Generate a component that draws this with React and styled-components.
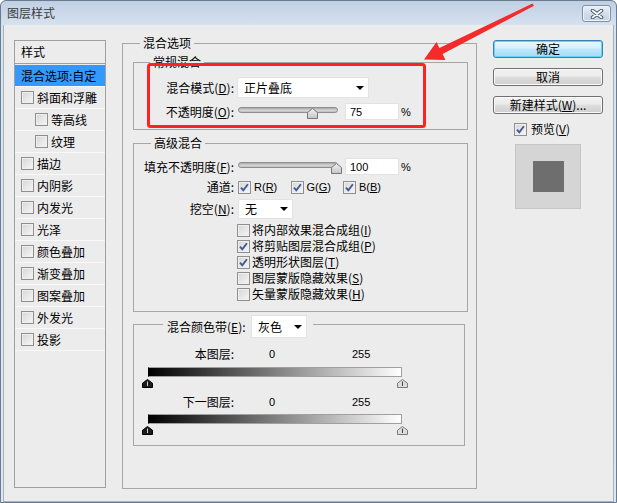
import React from "react"
import styled, { createGlobalStyle } from "styled-components"

const GlobalStyle = createGlobalStyle`
  html, body {
    margin: 0;
    padding: 0;
  }
  body {
    font-family: "Liberation Sans", "Noto Sans CJK SC", sans-serif;
    font-size: 12px;
    line-height: 16px;
    color: #000;
    background: #fff;
  }
  * {
    box-sizing: border-box;
  }
`

const Window = styled.div`
  position: relative;
  width: 617px;
  height: 503px;
  display: flex;
  flex-direction: column;
  border: 1px solid #6b7b90;
  border-radius: 6px 6px 0 0;
  background: linear-gradient(#bfcfe3, #d8e3f0 26px, #dce6f2);
  overflow: hidden;
`

const TitleBar = styled.div`
  height: 24px;
  flex: none;
  display: flex;
  align-items: center;
  padding: 0 5px 0 6px;
`

const Title = styled.div`
  font-family: "Noto Sans CJK SC", sans-serif;
  color: #3c3c3c;
`

const CloseButton = styled.div`
  margin-left: auto;
  align-self: flex-start;
  margin-top: 4px;
  width: 29px;
  height: 17px;
  display: flex;
  align-items: center;
  justify-content: center;
  border: 1px solid #7f90a6;
  border-radius: 3px;
  background: linear-gradient(#e9eff7, #d3deeb 50%, #c6d3e4);
  box-shadow: inset 0 0 0 1px #eef3f9;
`

const Body = styled.div`
  flex: 1;
  display: flex;
  align-items: flex-start;
  margin: 0 2px;
  padding: 10px 0 0 10px;
  background: #ececec;
  border: 1px solid #a3b2c5;
  border-top: none;
`

const StyleList = styled.div`
  flex: none;
  width: 92px;
  height: 448px;
  margin-top: 5px;
  border: 1px solid #a0a0a0;
  font-family: "Noto Sans CJK SC", sans-serif;
`

const ListHeader = styled.div`
  height: 23px;
  display: flex;
  align-items: center;
  padding-left: 6px;
  border-bottom: 1px solid #a0a0a0;
  margin-bottom: 1px;
`

const ListItem = styled.div`
  height: 22px;
  display: flex;
  align-items: center;
  padding-left: ${(p) => p.$indent}px;
  border-bottom: 1px solid #f9f9f9;
  background: ${(p) => (p.$selected ? "#3399ff" : "transparent")};
`

const ItemText = styled.span`
  margin-left: 3px;
  white-space: nowrap;
`

const Group = styled.fieldset`
  margin: ${(p) => p.$mt || 0}px ${(p) => p.$mr || 0}px 0 0;
  padding: 0;
  min-width: 0;
  border: 1px solid #a6a6a6;
`

const MainGroup = styled(Group)`
  flex: none;
  width: 355px;
  height: 454px;
  margin-left: 16px;
`

const Legend = styled.legend`
  margin-left: ${(p) => p.$offset}px;
  padding: 0 3px;
  height: 16px;
  line-height: 16px;
  font-family: "Noto Sans CJK SC", sans-serif;
`

const BandLegend = styled.legend`
  margin-left: 29px;
  padding: 0 6px 0 4px;
  height: 18px;
  display: flex;
  align-items: flex-start;
  font-family: "Noto Sans CJK SC", sans-serif;
`

const MainInner = styled.div`
  padding: 3px 8px 0 10px;
`

const GroupInner = styled.div`
  padding: ${(p) => p.$pt}px 0 ${(p) => p.$pb}px 0;
`

const Row = styled.div`
  display: flex;
  align-items: center;
  height: ${(p) => p.$h}px;
  margin-top: ${(p) => p.$mt || 0}px;
`

const Label = styled.div`
  flex: none;
  width: ${(p) => p.$w || 100}px;
  text-align: ${(p) => p.$align || "right"};
  white-space: nowrap;
  line-height: ${(p) => p.$lh || 16}px;
  font-family: "Noto Sans CJK SC", sans-serif;
`

const U = styled.span`
  text-decoration: underline;
  text-underline-offset: 1px;
`

const Select = styled.div`
  flex: none;
  width: ${(p) => p.$w}px;
  height: ${(p) => p.$h}px;
  margin-left: ${(p) => p.$ml || 0}px;
  margin-bottom: ${(p) => p.$mb || 0}px;
  display: flex;
  align-items: center;
  padding: 0 4px 0 6px;
  background: #fff;
  border: 1px solid #e3e3e3;
  font-family: "Noto Sans CJK SC", sans-serif;
`

const Caret = styled.span`
  margin-left: auto;
  width: 0;
  height: 0;
  border-left: 4px solid transparent;
  border-right: 4px solid transparent;
  border-top: 4px solid #000;
`

const Slider = styled.div`
  position: relative;
  flex: none;
  width: 100px;
  height: 11px;
  margin-left: 4px;
  align-self: flex-start;
  margin-top: 4px;
`

const Track = styled.div`
  height: 6px;
  border: 1px solid #8e8e8e;
  border-radius: 3px;
  background: linear-gradient(#a9a9a9, #d6d6d6 60%, #bdbdbd);
`

const ThumbWrap = styled.div`
  position: absolute;
  top: 0;
  width: 11px;
  height: 11px;
`

const NumInput = styled.div`
  flex: none;
  width: 54px;
  height: 17px;
  margin-left: 7px;
  display: flex;
  align-items: center;
  padding-left: 4px;
  background: #fff;
  border: 1px solid #e3e3e3;
  font-size: 11px;
`

const Percent = styled.span`
  margin-left: 2px;
  font-size: 11px;
`

const Channels = styled.div`
  display: flex;
  margin-left: 4px;
`

const Channel = styled.div`
  display: flex;
  align-items: center;
  width: 52.5px;
  font-size: 11px;
`

const ChannelText = styled.span`
  margin-left: 3px;
`

const CheckList = styled.div`
  margin-top: 3px;
  padding-left: 103px;
  font-family: "Noto Sans CJK SC", sans-serif;
`

const CheckRow = styled.div`
  height: 16px;
  display: flex;
  align-items: center;
`

const CheckText = styled.span`
  margin-left: 2px;
  white-space: nowrap;
`

const Box = styled.span`
  flex: none;
  width: 13px;
  height: 13px;
  display: inline-flex;
  align-items: center;
  justify-content: center;
  border: 1px solid #8f8f8f;
  background: linear-gradient(135deg, #d6d6d6, #f6f6f6);
  box-shadow: inset 0 0 0 1px #efefef;
`

const Num = styled.div`
  flex: none;
  width: ${(p) => p.$w || 20}px;
  margin-left: ${(p) => p.$ml || 0}px;
  font-size: 11px;
`

const GradientBar = styled.div`
  width: 254px;
  height: 10px;
  margin: ${(p) => p.$mt}px 0 0 14px;
  border: 1px solid #a0a0a0;
  border-left-color: #000;
  background: linear-gradient(to right, #000, #fff);
`

const BandThumbs = styled.div`
  width: 266px;
  height: 9px;
  margin: 2px 0 0 8px;
  display: flex;
  justify-content: space-between;
`

const Side = styled.div`
  flex: none;
  width: 110px;
  margin: 5px 0 0 16px;
  font-family: "Noto Sans CJK SC", sans-serif;
`

const Button = styled.div`
  height: 18px;
  display: flex;
  align-items: center;
  justify-content: center;
  border: 1px solid ${(p) => (p.$primary ? "#3c7fb1" : "#707070")};
  border-radius: 3px;
  background: ${(p) =>
    p.$primary
      ? "linear-gradient(#eaf7fe, #d6f0fd 45%, #bee7fd 50%, #a7daf6)"
      : "linear-gradient(#f2f2f2, #ebebeb 45%, #dddddd 50%, #cfcfcf)"};
  box-shadow: inset 0 0 0 1px ${(p) => (p.$primary ? "#63d3fb" : "#fbfbfb")};
  & + & {
    margin-top: 10px;
  }
`

const PreviewRow = styled.div`
  height: 14px;
  margin-top: 8px;
  padding-left: 21px;
  display: flex;
  align-items: center;
`

const PreviewText = styled.span`
  margin-left: 4px;
`

const PreviewBox = styled.div`
  width: 66px;
  height: 65px;
  margin: 8px 0 0 22px;
  display: flex;
  align-items: center;
  justify-content: center;
  background: #d5d5d5;
  border: 1px solid #c6c6c6;
`

const PreviewSwatch = styled.div`
  width: 31px;
  height: 31px;
  background: #6e6e6e;
`

const Annotation = styled.svg`
  position: absolute;
  top: -1px;
  left: -1px;
  pointer-events: none;
`

const Check = ({ checked }) => (
  <Box>
    {checked && (
      <svg width="11" height="11" viewBox="0 0 11 11">
        <path d="M2 5.6 L4.3 8.3 L8.9 2.2" fill="none" stroke="#3e5a96" strokeWidth="1.9" />
      </svg>
    )}
  </Box>
)

const SliderThumb = ({ value }) => (
  <ThumbWrap style={{ left: `${value * 0.98 - 5}px` }}>
    <svg width="11" height="11" viewBox="0 0 11 11">
      <defs>
        <linearGradient id={`st${value}`} x1="0" y1="0" x2="0" y2="1">
          <stop offset="0" stopColor="#f4f4f4" />
          <stop offset="1" stopColor="#c4c4c4" />
        </linearGradient>
      </defs>
      <path d="M5.5 0.5 L10.5 4.5 V10.5 H0.5 V4.5 Z" fill={`url(#st${value})`} stroke="#777" />
    </svg>
  </ThumbWrap>
)

const BandThumb = ({ dark }) => (
  <svg width="11" height="9" viewBox="0 0 11 9">
    <path
      d="M5.5 0.5 L10.5 4.2 V8.5 H0.5 V4.2 Z"
      fill={dark ? "#1c1c1c" : "#dcdcdc"}
      stroke={dark ? "#000" : "#7a7a7a"}
    />
    <path d="M5.5 2.5 V7" stroke={dark ? "#d0d0d0" : "#444"} strokeWidth="1" />
  </svg>
)

const styleItems = [
  { label: "斜面和浮雕", indent: 6 },
  { label: "等高线", indent: 20 },
  { label: "纹理", indent: 20 },
  { label: "描边", indent: 6 },
  { label: "内阴影", indent: 6 },
  { label: "内发光", indent: 6 },
  { label: "光泽", indent: 6 },
  { label: "颜色叠加", indent: 6 },
  { label: "渐变叠加", indent: 6 },
  { label: "图案叠加", indent: 6 },
  { label: "外发光", indent: 6 },
  { label: "投影", indent: 6 },
]

const advancedChecks = [
  { text: "将内部效果混合成组", key: "I", checked: false },
  { text: "将剪贴图层混合成组", key: "P", checked: true },
  { text: "透明形状图层", key: "T", checked: true },
  { text: "图层蒙版隐藏效果", key: "S", checked: false },
  { text: "矢量蒙版隐藏效果", key: "H", checked: false },
]

const App = () => {
  return (
    <>
      <GlobalStyle />
      <Window>
        <TitleBar>
          <Title>图层样式</Title>
          <CloseButton>
            <svg width="14" height="10" viewBox="0 0 14 10">
              <path d="M2.5 1.5 L11.5 8.5 M11.5 1.5 L2.5 8.5" stroke="#4d5c70" strokeWidth="3.6" strokeLinecap="round" />
              <path d="M2.5 1.5 L11.5 8.5 M11.5 1.5 L2.5 8.5" stroke="#fff" strokeWidth="1.6" strokeLinecap="round" />
            </svg>
          </CloseButton>
        </TitleBar>

        <Body>
          <StyleList>
            <ListHeader>样式</ListHeader>
            <ListItem $indent={6} $selected>
              混合选项:自定
            </ListItem>
            {styleItems.map((item) => (
              <ListItem key={item.label} $indent={item.indent}>
                <Check />
                <ItemText>{item.label}</ItemText>
              </ListItem>
            ))}
          </StyleList>

          <MainGroup>
            <Legend $offset={17}>混合选项</Legend>
            <MainInner>
              <Group>
                <Legend $offset={16}>常规混合</Legend>
                <GroupInner $pt={7} $pb={9}>
                  <Row $h={21}>
                    <Label>
                      混合模式(<U>D</U>):
                    </Label>
                    <Select $w={132} $h={21} $ml={3}>
                      正片叠底
                      <Caret />
                    </Select>
                  </Row>
                  <Row $h={17} $mt={5}>
                    <Label>
                      不透明度(<U>O</U>):
                    </Label>
                    <Slider>
                      <Track />
                      <SliderThumb value={75} />
                    </Slider>
                    <NumInput>75</NumInput>
                    <Percent>%</Percent>
                  </Row>
                </GroupInner>
              </Group>

              <Group $mt={5}>
                <Legend $offset={17}>高级混合</Legend>
                <GroupInner $pt={7} $pb={9}>
                  <Row $h={17}>
                    <Label>
                      填充不透明度(<U>F</U>):
                    </Label>
                    <Slider>
                      <Track />
                      <SliderThumb value={100} />
                    </Slider>
                    <NumInput>100</NumInput>
                    <Percent>%</Percent>
                  </Row>
                  <Row $h={14} $mt={5}>
                    <Label>通道:</Label>
                    <Channels>
                      {["R", "G", "B"].map((c) => (
                        <Channel key={c}>
                          <Check checked />
                          <ChannelText>
                            {c}(<U>{c}</U>)
                          </ChannelText>
                        </Channel>
                      ))}
                    </Channels>
                  </Row>
                  <Row $h={20} $mt={5}>
                    <Label>
                      挖空(<U>N</U>):
                    </Label>
                    <Select $w={55} $h={20} $ml={4}>
                      无
                      <Caret />
                    </Select>
                  </Row>
                  <CheckList>
                    {advancedChecks.map((c) => (
                      <CheckRow key={c.key}>
                        <Check checked={c.checked} />
                        <CheckText>
                          {c.text}(<U>{c.key}</U>)
                        </CheckText>
                      </CheckRow>
                    ))}
                  </CheckList>
                </GroupInner>
              </Group>

              <Group $mt={3} $mr={3}>
                <BandLegend>
                  <Label $w={84} $align="left" $lh={23}>
                    混合颜色带(<U>E</U>):
                  </Label>
                  <Select $w={56} $h={23} $mb={-5}>
                    灰色
                    <Caret />
                  </Select>
                </BandLegend>
                <GroupInner $pt={14} $pb={10}>
                  <Row $h={14}>
                    <Label>本图层:</Label>
                    <Num $w={83} $ml={35}>0</Num>
                    <Num>255</Num>
                  </Row>
                  <GradientBar $mt={6} />
                  <BandThumbs>
                    <BandThumb dark />
                    <BandThumb />
                  </BandThumbs>
                  <Row $h={14} $mt={7}>
                    <Label>下一图层:</Label>
                    <Num $w={83} $ml={35}>0</Num>
                    <Num>255</Num>
                  </Row>
                  <GradientBar $mt={5} />
                  <BandThumbs>
                    <BandThumb dark />
                    <BandThumb />
                  </BandThumbs>
                </GroupInner>
              </Group>
            </MainInner>
          </MainGroup>

          <Side>
            <Button $primary>确定</Button>
            <Button>取消</Button>
            <Button>
              新建样式(<U>W</U>)...
            </Button>
            <PreviewRow>
              <Check checked />
              <PreviewText>
                预览(<U>V</U>)
              </PreviewText>
            </PreviewRow>
            <PreviewBox>
              <PreviewSwatch />
            </PreviewBox>
          </Side>
        </Body>

        <Annotation width="617" height="503" viewBox="0 0 617 503">
          <rect x="148.5" y="64.5" width="276" height="62" rx="2" fill="none" stroke="#ff2222" strokeWidth="3" />
          <polygon
            points="532.5,3.5 534,5.8 442.6,54.1 445.5,59.9 424,59.6 436.5,42.1 439.4,47.9"
            fill="#f52b2b"
          />
        </Annotation>
      </Window>
    </>
  )
}

export default App
